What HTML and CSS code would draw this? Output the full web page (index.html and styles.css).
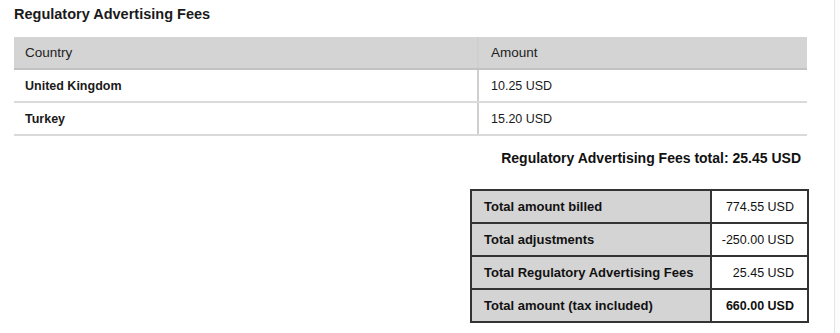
FILE: index.html
```html
<!DOCTYPE html>
<html>
<head>
<meta charset="utf-8">
<link rel="stylesheet" href="styles.css">
</head>
<body>
<div class="page">
  <div class="content">
    <h2 class="title">Regulatory Advertising Fees</h2>
    <table class="fees">
      <thead>
        <tr><th class="c1">Country</th><th class="c2">Amount</th></tr>
      </thead>
      <tbody>
        <tr><td class="c1 country">United Kingdom</td><td class="c2">10.25 USD</td></tr>
        <tr><td class="c1 country">Turkey</td><td class="c2">15.20 USD</td></tr>
      </tbody>
    </table>
    <div class="fees-total">Regulatory Advertising Fees total: 25.45 USD</div>
    <div class="summary-wrap">
      <table class="summary">
        <tr><td class="label">Total amount billed</td><td class="value">774.55 USD</td></tr>
        <tr><td class="label">Total adjustments</td><td class="value">-250.00 USD</td></tr>
        <tr><td class="label">Total Regulatory Advertising Fees</td><td class="value">25.45 USD</td></tr>
        <tr><td class="label">Total amount (tax included)</td><td class="value strong">660.00 USD</td></tr>
      </table>
    </div>
  </div>
  <div class="edge"></div>
</div>
</body>
</html>
```

FILE: styles.css
```css
html, body {
  margin: 0;
  padding: 0;
  background: #ffffff;
}
body {
  font-family: "Liberation Sans", Arial, sans-serif;
  color: #1a1a1a;
}
.page {
  display: flex;
  width: 840px;
  height: 333px;
  overflow: hidden;
}
.content {
  width: 834px;
  flex: none;
  padding-left: 14px;
  box-sizing: border-box;
}
.edge {
  flex: 1;
  border-left: 1px solid #e1e4ea;
  background: #fcfcfd;
}
.title {
  margin: 0;
  padding-top: 6px;
  height: 31px;
  font-size: 14.5px;
  line-height: 17px;
  font-weight: bold;
  color: #1a1a1a;
}
.fees {
  width: 793px;
  border-collapse: collapse;
  border-spacing: 0;
}
.fees th {
  background: #d4d4d4;
  font-weight: normal;
  font-size: 13.5px;
  text-align: left;
  height: 31px;
  padding: 0 0 0 11px;
  border-bottom: 2px solid #c2c2c2;
  color: #222;
}
.fees td {
  font-size: 12.5px;
  height: 31px;
  padding: 0 0 0 11px;
  border-bottom: 2px solid #dadada;
  color: #1a1a1a;
}
.fees .c1 {
  width: 452px;
  border-right: 2px solid #cfcfcf;
}
.fees th.c2, .fees td.c2 {
  padding-left: 12px;
}
.fees .country {
  font-weight: bold;
}
.fees-total {
  text-align: right;
  width: 787px;
  margin-top: 13px;
  font-size: 14px;
  line-height: 18px;
  font-weight: bold;
  color: #111;
}
.summary-wrap {
  width: 795px;
  display: flex;
  justify-content: flex-end;
  margin-top: 22px;
}
.summary {
  width: 339px;
  border-collapse: collapse;
  border: 2px solid #333;
}
.summary td {
  border: 2px solid #333;
  height: 31px;
  font-size: 12.5px;
  padding: 0;
  color: #111;
}
.summary .label {
  width: 226px;
  background: #d4d4d4;
  font-weight: bold;
  font-size: 13px;
  padding-left: 12px;
}
.summary .value {
  text-align: right;
  padding-right: 13px;
}
.summary .strong {
  font-weight: bold;
}
```
